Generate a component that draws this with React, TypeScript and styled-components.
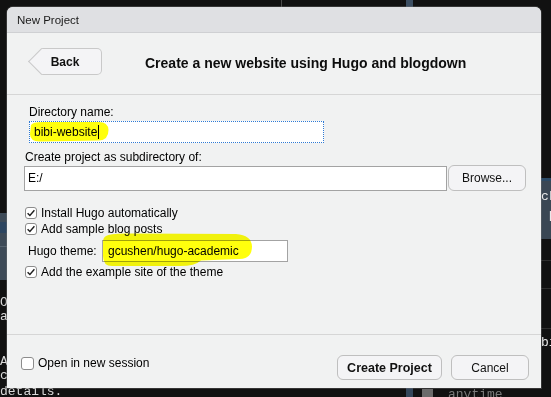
import React from 'react';
import styled, { createGlobalStyle } from 'styled-components';

const GlobalStyle = createGlobalStyle`
  html, body {
    margin: 0;
    padding: 0;
    background: #111111;
  }
  body {
    font-family: "Liberation Sans", Arial, sans-serif;
  }
`;

const Desktop = styled.div`
  position: relative;
  width: 551px;
  height: 397px;
  overflow: hidden;
  background: #111111;
`;

/* bits of the windows behind the dialog */
const Shape = styled.div<{ $x: number; $y: number; $w: number; $h: number; $bg: string }>`
  position: absolute;
  left: ${(p) => p.$x}px;
  top: ${(p) => p.$y}px;
  width: ${(p) => p.$w}px;
  height: ${(p) => p.$h}px;
  background: ${(p) => p.$bg};
`;

const ConsoleText = styled.div<{ $x: number; $y: number; $w: number; $color?: string }>`
  position: absolute;
  left: ${(p) => p.$x}px;
  top: ${(p) => p.$y}px;
  width: ${(p) => p.$w}px;
  overflow: hidden;
  font-family: "Liberation Mono", "DejaVu Sans Mono", monospace;
  font-size: 13px;
  line-height: 14px;
  color: ${(p) => p.$color || '#d9d9d9'};
  white-space: pre;
`;

const Dialog = styled.div`
  position: absolute;
  left: 7px;
  top: 7px;
  width: 534px;
  height: 381px;
  display: flex;
  flex-direction: column;
  background: #f1f2f2;
  border-radius: 6px 6px 0 0;
  overflow: hidden;
  box-shadow: 0 0 0 1px rgba(120, 120, 120, 0.35);
  color: #000;
`;

const TitleBar = styled.div`
  flex: none;
  height: 25px;
  display: flex;
  align-items: center;
  padding-left: 10px;
  background: #dfe0e3;
  border-bottom: 1px solid #cfd0d3;
  font-size: 11.5px;
  color: #1a1a1a;
`;

const Header = styled.div`
  flex: none;
  height: 61px;
  display: flex;
  align-items: flex-start;
  padding-left: 34px;
  border-bottom: 1px solid #d6d6d6;
`;

const BackButton = styled.button`
  position: relative;
  margin-top: 15px;
  width: 61px;
  height: 27px;
  padding: 0 12px 0 0;
  background: #f4f4f6;
  border: 1px solid #c9c9c9;
  border-left: none;
  border-radius: 0 5px 5px 0;
  font-family: inherit;
  font-size: 12px;
  font-weight: bold;
  color: #111;

  &::before {
    content: '';
    position: absolute;
    left: -9px;
    top: 3px;
    width: 18px;
    height: 18px;
    background: #f4f4f6;
    border-left: 1px solid #c9c9c9;
    border-bottom: 1px solid #c9c9c9;
    transform: rotate(45deg);
  }

  span {
    position: relative;
  }
`;

const Title = styled.h1`
  margin: 22px 0 0 43px;
  font-size: 14px;
  line-height: 17px;
  font-weight: bold;
  color: #0d0d0d;
`;

const Content = styled.div`
  flex: 1;
  display: flex;
  flex-direction: column;
  align-items: flex-start;
  padding: 9px 0 0 17px;
  border-bottom: 1px solid #d6d6d6;
`;

const Label = styled.div<{ $indent?: number; $top?: number; $width?: number }>`
  margin-left: ${(p) => p.$indent || 0}px;
  margin-top: ${(p) => p.$top || 0}px;
  width: ${(p) => (p.$width ? `${p.$width}px` : 'auto')};
  font-size: 12px;
  line-height: 16px;
`;

const Field = styled.div<{ $width: number; $height: number; $focus?: boolean; $indent?: number; $top?: number; $pad?: number }>`
  box-sizing: border-box;
  width: ${(p) => p.$width}px;
  height: ${(p) => p.$height}px;
  margin-left: ${(p) => p.$indent || 0}px;
  margin-top: ${(p) => p.$top || 0}px;
  padding-left: ${(p) => p.$pad ?? 4}px;
  display: flex;
  align-items: center;
  background: #ffffff;
  border: 1px ${(p) => (p.$focus ? 'dotted #2f7ad4' : 'solid #a3a3a3')};
  font-size: 12px;
`;

const Caret = styled.span`
  display: inline-block;
  width: 1px;
  height: 14px;
  margin-left: 1px;
  background: #000;
`;

const Row = styled.div<{ $top?: number; $indent?: number }>`
  display: flex;
  align-items: center;
  gap: 1px;
  margin-top: ${(p) => p.$top || 0}px;
  margin-left: ${(p) => p.$indent || 0}px;
`;

const CheckRow = styled.label<{ $top?: number; $indent?: number }>`
  display: flex;
  align-items: center;
  gap: 4px;
  height: 16px;
  margin-top: ${(p) => p.$top || 0}px;
  margin-left: ${(p) => p.$indent || 0}px;
  font-size: 12px;
`;

const Box = styled.span<{ $size: number }>`
  box-sizing: border-box;
  width: ${(p) => p.$size}px;
  height: ${(p) => p.$size}px;
  display: flex;
  align-items: center;
  justify-content: center;
  background: #ffffff;
  border: 1px solid #8c8c8c;
  border-radius: 3px;
`;

const Button = styled.button<{ $width: number; $height?: number; $bold?: boolean }>`
  box-sizing: border-box;
  width: ${(p) => p.$width}px;
  height: ${(p) => p.$height || 25}px;
  padding: 0;
  background: #f4f4f6;
  border: 1px solid #bfbfbf;
  border-radius: 6px;
  font-family: inherit;
  font-size: ${(p) => (p.$bold ? '12.5px' : '12px')};
  font-weight: ${(p) => (p.$bold ? 'bold' : 'normal')};
  color: #111;
`;

const Footer = styled.div`
  flex: none;
  height: 53px;
  box-sizing: border-box;
  display: flex;
  align-items: flex-start;
  justify-content: space-between;
  padding: 20px 12px 0 14px;
`;

const Buttons = styled.div`
  display: flex;
  gap: 9px;
`;

const Highlighter = styled.svg`
  position: absolute;
  left: 0;
  top: 0;
  pointer-events: none;
  mix-blend-mode: multiply;
`;

function Check({ checked, size = 12 }: { checked?: boolean; size?: number }) {
  return (
    <Box $size={size}>
      {checked && (
        <svg width="10" height="10" viewBox="0 0 10 10">
          <path d="M1.6 5.2 L3.9 7.5 L8.4 2.2" fill="none" stroke="#1e1e1e" strokeWidth="1.4" />
        </svg>
      )}
    </Box>
  );
}

export default function App() {
  return (
    <>
      <GlobalStyle />
      <Desktop>
        <Shape $x={281} $y={0} $w={1} $h={7} $bg="#4a4a4a" />
        <Shape $x={406} $y={0} $w={7} $h={7} $bg="#3c4e62" />
        <Shape $x={0} $y={213} $w={7} $h={67} $bg="#3d4a57" />
        <Shape $x={0} $y={222} $w={7} $h={11} $bg="#2c4560" />
        <Shape $x={0} $y={246} $w={7} $h={1} $bg="#56636f" />
        <Shape $x={541} $y={178} $w={10} $h={61} $bg="#3a4754" />
        <Shape $x={541} $y={178} $w={10} $h={3} $bg="#2b4a66" />
        <Shape $x={541} $y={260} $w={10} $h={1} $bg="#2e2e2e" />
        <Shape $x={541} $y={288} $w={10} $h={1} $bg="#2e2e2e" />
        <Shape $x={541} $y={328} $w={10} $h={1} $bg="#2e2e2e" />
        <Shape $x={406} $y={388} $w={7} $h={9} $bg="#34465a" />
        <Shape $x={422} $y={389} $w={11} $h={8} $bg="#6b6b6b" />
        <ConsoleText $x={0} $y={296} $w={7}>{'O\na'}</ConsoleText>
        <ConsoleText $x={0} $y={355} $w={7}>{'A\nc'}</ConsoleText>
        <ConsoleText $x={0} $y={385} $w={80}>details.</ConsoleText>
        <ConsoleText $x={541} $y={190} $w={10} $color="#e8e8e8">ck</ConsoleText>
        <ConsoleText $x={541} $y={208} $w={10} $color="#e8e8e8">{' p'}</ConsoleText>
        <ConsoleText $x={541} $y={336} $w={10} $color="#e8e8e8">bi</ConsoleText>
        <ConsoleText $x={448} $y={388} $w={70} $color="#7a7a7a">anytime</ConsoleText>

        <Dialog>
          <TitleBar>New Project</TitleBar>
          <Header>
            <BackButton>
              <span>Back</span>
            </BackButton>
            <Title>Create a new website using Hugo and blogdown</Title>
          </Header>
          <Content>
            <Label $indent={5}>Directory name:</Label>
            <Field $width={295} $height={22} $focus $indent={5} $top={1}>
              bibi-website
              <Caret />
            </Field>
            <Label $indent={1} $top={6}>Create project as subdirectory of:</Label>
            <Row>
              <Field $width={423} $height={25} $pad={3}>E:/</Field>
              <Button $width={78} $height={26}>Browse...</Button>
            </Row>
            <CheckRow $top={14} $indent={1}>
              <Check checked />
              Install Hugo automatically
            </CheckRow>
            <CheckRow $indent={1}>
              <Check checked />
              Add sample blog posts
            </CheckRow>
            <Row $top={3} $indent={4}>
              <Label $width={73}>Hugo theme:</Label>
              <Field $width={186} $height={22} $pad={5}>gcushen/hugo-academic</Field>
            </Row>
            <CheckRow $top={2} $indent={1}>
              <Check checked />
              Add the example site of the theme
            </CheckRow>
          </Content>
          <Footer>
            <CheckRow>
              <Check size={13} />
              Open in new session
            </CheckRow>
            <Buttons>
              <Button $width={105} $bold>Create Project</Button>
              <Button $width={78}>Cancel</Button>
            </Buttons>
          </Footer>
        </Dialog>

        <Highlighter width="551" height="397" viewBox="0 0 551 397">
          <path
            d="M31 125 Q 33 121.5 45 122 L 99 122 Q 108 122 108.5 130 Q 108.5 140 99 140.5 L 41 141.5 Q 30 142 30 134 Z"
            fill="#ffff00"
            opacity="0.95"
          />
          <path
            d="M106 236 Q 110 233 130 233.5 L 236 234 Q 251.5 235 252 246.5 Q 252 259 239 259 L 201 260.5 Q 195 266 180 266 L 112 266 Q 103 266 103 256 L 103 242 Q 103 237.5 106 236 Z"
            fill="#ffff00"
            opacity="0.95"
          />
        </Highlighter>
      </Desktop>
    </>
  );
}
